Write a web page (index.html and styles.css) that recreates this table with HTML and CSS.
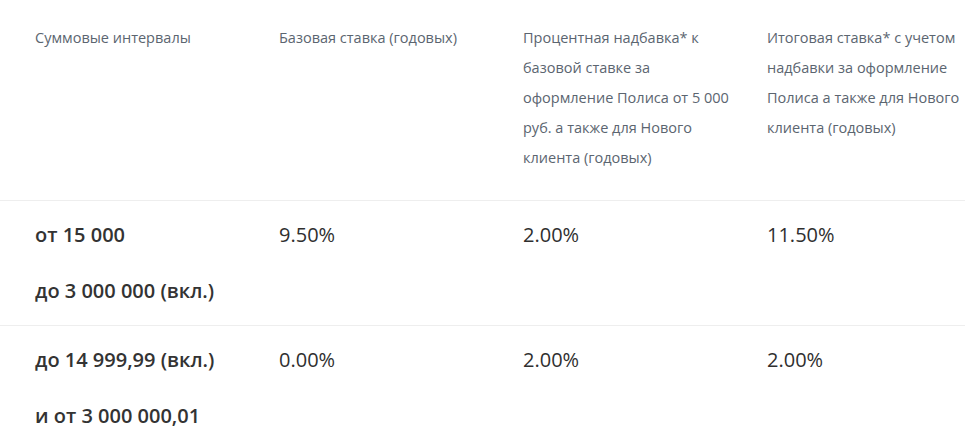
FILE: index.html
```html
<!DOCTYPE html>
<html lang="ru">
<head>
<meta charset="utf-8">
<link rel="stylesheet" href="styles.css">
</head>
<body>
<div class="table">
  <div class="row head">
    <div class="cell">Суммовые интервалы</div>
    <div class="cell">Базовая ставка (годовых)</div>
    <div class="cell">Процентная надбавка* к<br>базовой ставке за<br>оформление Полиса от 5 000<br>руб. а также для Нового<br>клиента (годовых)</div>
    <div class="cell">Итоговая ставка* с учетом<br>надбавки за оформление<br>Полиса а также для Нового<br>клиента (годовых)</div>
  </div>
  <div class="row body">
    <div class="cell first"><p>от 15 000</p><p>до 3 000 000 (вкл.)</p></div>
    <div class="cell"><p>9.50%</p></div>
    <div class="cell"><p>2.00%</p></div>
    <div class="cell"><p>11.50%</p></div>
  </div>
  <div class="row body">
    <div class="cell first"><p>до 14 999,99 (вкл.)</p><p>и от 3 000 000,01</p></div>
    <div class="cell"><p>0.00%</p></div>
    <div class="cell"><p>2.00%</p></div>
    <div class="cell"><p>2.00%</p></div>
  </div>
</div>
</body>
</html>
```

FILE: styles.css
```css
html, body {
  margin: 0;
  padding: 0;
  background: #ffffff;
  overflow: hidden;
}
body {
  font-family: "Open Sans", "Noto Sans", sans-serif;
  color: #333333;
}
.table {
  width: 100%;
}
.row {
  display: grid;
  grid-template-columns: 279px 244px 244px minmax(0, 1fr);
  border-bottom: 1px solid #eeeeee;
}
.cell {
  white-space: nowrap;
  overflow: hidden;
}
.row .cell:first-child {
  padding-left: 35px;
}
.head {
  padding: 23px 0 27px;
  font-size: 14.5px;
  line-height: 30px;
  color: #5b6570;
}
.body {
  padding: 19px 0;
  font-size: 20px;
  line-height: 30px;
  color: #2f2f2f;
}
.body p {
  margin: 0;
}
.body p + p {
  margin-top: 26px;
}
.first {
  font-weight: 600;
  color: #333333;
}
```
